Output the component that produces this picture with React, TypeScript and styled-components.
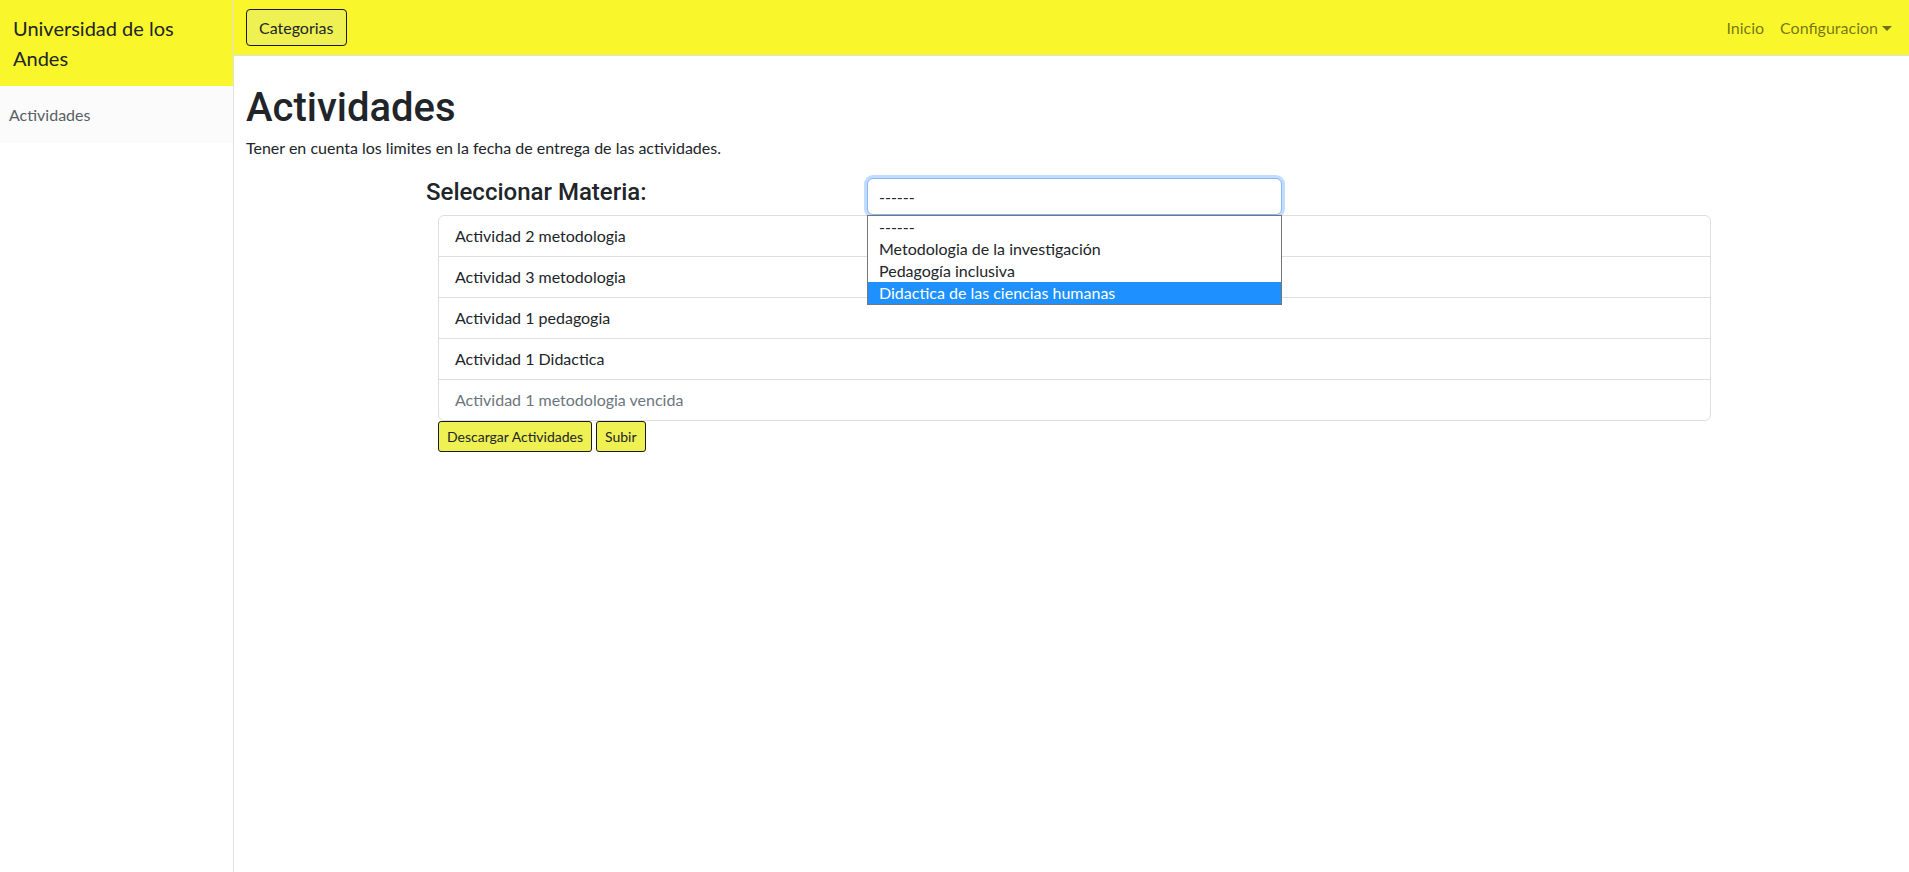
import React from "react";
import styled, { createGlobalStyle } from "styled-components";

const YELLOW = "#f9f72c";
const BTN_YELLOW = "#eff153";

const GlobalStyle = createGlobalStyle`
  html, body { margin: 0; padding: 0; background: #fff; }
  body {
    font-family: "Lato", "Liberation Sans", sans-serif;
    font-size: 16px;
    line-height: 1.5;
    color: #212529;
  }
  * { box-sizing: border-box; }
`;

const Wrapper = styled.div`
  display: flex;
  min-height: 100vh;
`;

const Sidebar = styled.aside`
  width: 234px;
  flex: none;
  border-right: 1px solid #dee2e6;
  background: #fff;
  display: flex;
  flex-direction: column;
`;

const SidebarHeading = styled.div`
  background: ${YELLOW};
  padding: 13px 12px 13px 13px;
  font-size: 20px;
  line-height: 30px;
  color: #212529;
`;

const SidebarLink = styled.a`
  display: block;
  padding: 17px 9px 16px;
  background: #fbfbfb;
  color: #595f66;
  text-decoration: none;
  font-size: 16px;
  line-height: 24px;
`;

const Main = styled.div`
  flex: 1;
  min-width: 0;
  display: flex;
  flex-direction: column;
`;

const Navbar = styled.nav`
  height: 56px;
  background: ${YELLOW};
  border-bottom: 1px solid #dee2e6;
  display: flex;
  align-items: center;
  padding: 0 9px 0 12px;
`;

const Button = styled.button<{ $small?: boolean }>`
  font-family: inherit;
  background: ${BTN_YELLOW};
  color: #212529;
  border: 1px solid #1a1a1a;
  border-radius: ${(p) => (p.$small ? "3px" : "4px")};
  font-size: ${(p) => (p.$small ? "14px" : "16px")};
  line-height: ${(p) => (p.$small ? "21px" : "24px")};
  padding: ${(p) => (p.$small ? "4px 8px" : "5.5px 12px")};
  cursor: pointer;
`;

const NavList = styled.ul`
  list-style: none;
  margin: 0 0 0 auto;
  padding: 0;
  display: flex;
  align-items: center;
`;

const NavLink = styled.a`
  display: flex;
  align-items: center;
  padding: 8px 8px;
  color: rgba(0, 0, 0, 0.55);
  text-decoration: none;
  font-size: 16px;
  line-height: 24px;
`;

const Caret = styled.span`
  display: inline-block;
  margin-left: 4px;
  margin-top: 1px;
  border-top: 5px solid currentColor;
  border-left: 5px solid transparent;
  border-right: 5px solid transparent;
`;

const Content = styled.main`
  padding: 0 12px;
`;

const Title = styled.h1`
  font-family: "Roboto", "Lato", sans-serif;
  font-weight: 500;
  font-size: 40px;
  line-height: 1.2;
  margin: 28px 0 4px;
  color: #212529;
`;

const Lead = styled.p`
  margin: 0 0 18px;
  font-size: 16px;
  line-height: 24px;
`;

const Section = styled.section`
  margin-left: 192px;
  width: 1273px;
`;

const FormRow = styled.div`
  display: flex;
  align-items: flex-start;
  margin-left: -12px;
`;

const Label = styled.label`
  width: 441px;
  flex: none;
  font-family: "Roboto", "Lato", sans-serif;
  font-weight: 500;
  font-size: 24px;
  line-height: 1.2;
  color: #212529;
`;

const SelectWrap = styled.div`
  position: relative;
  width: 415px;
`;

const SelectBox = styled.div`
  height: 37px;
  border: 1px solid #86b7fe;
  border-radius: 6px;
  box-shadow: 0 0 0 3px rgba(13, 110, 253, 0.25);
  padding: 5.5px 11px;
  font-size: 16px;
  line-height: 24px;
  background: #fff;
`;

const Dropdown = styled.ul`
  position: absolute;
  z-index: 10;
  top: 37px;
  left: 0;
  right: 0;
  margin: 0;
  padding: 0;
  list-style: none;
  background: #fff;
  border: 1px solid #767676;
`;

const Option = styled.li<{ $selected?: boolean }>`
  height: 22px;
  padding: 0 11px;
  font-size: 16px;
  line-height: 22px;
  background: ${(p) => (p.$selected ? "#1e90ff" : "transparent")};
  color: ${(p) => (p.$selected ? "#fff" : "#212529")};
`;

const ListGroup = styled.ul`
  margin: 0;
  padding: 0;
  list-style: none;
  border: 1px solid #dfdfdf;
  border-radius: 6px;
  overflow: hidden;
`;

const ListItem = styled.li<{ $disabled?: boolean }>`
  padding: 8px 16px;
  font-size: 16px;
  line-height: 24px;
  color: ${(p) => (p.$disabled ? "#6c757d" : "#212529")};
  & + & {
    border-top: 1px solid #dfdfdf;
  }
`;

const Actions = styled.div`
  display: flex;
  gap: 4px;
`;

const activities = [
  { name: "Actividad 2 metodologia" },
  { name: "Actividad 3 metodologia" },
  { name: "Actividad 1 pedagogia" },
  { name: "Actividad 1 Didactica" },
  { name: "Actividad 1 metodologia vencida", disabled: true },
];

const options = [
  "------",
  "Metodologia de la investigación",
  "Pedagogía inclusiva",
  "Didactica de las ciencias humanas",
];

export default function App() {
  return (
    <>
      <GlobalStyle />
      <Wrapper>
        <Sidebar>
          <SidebarHeading>Universidad de los Andes</SidebarHeading>
          <SidebarLink href="#">Actividades</SidebarLink>
        </Sidebar>
        <Main>
          <Navbar>
            <Button>Categorias</Button>
            <NavList>
              <li>
                <NavLink href="#">Inicio</NavLink>
              </li>
              <li>
                <NavLink href="#">
                  Configuracion
                  <Caret />
                </NavLink>
              </li>
            </NavList>
          </Navbar>
          <Content>
            <Title>Actividades</Title>
            <Lead>Tener en cuenta los limites en la fecha de entrega de las actividades.</Lead>
            <Section>
              <FormRow>
                <Label>Seleccionar Materia:</Label>
                <SelectWrap>
                  <SelectBox>------</SelectBox>
                  <Dropdown>
                    {options.map((o, i) => (
                      <Option key={o} $selected={i === options.length - 1}>
                        {o}
                      </Option>
                    ))}
                  </Dropdown>
                </SelectWrap>
              </FormRow>
              <ListGroup>
                {activities.map((a) => (
                  <ListItem key={a.name} $disabled={a.disabled}>
                    {a.name}
                  </ListItem>
                ))}
              </ListGroup>
              <Actions>
                <Button $small>Descargar Actividades</Button>
                <Button $small>Subir</Button>
              </Actions>
            </Section>
          </Content>
        </Main>
      </Wrapper>
    </>
  );
}
